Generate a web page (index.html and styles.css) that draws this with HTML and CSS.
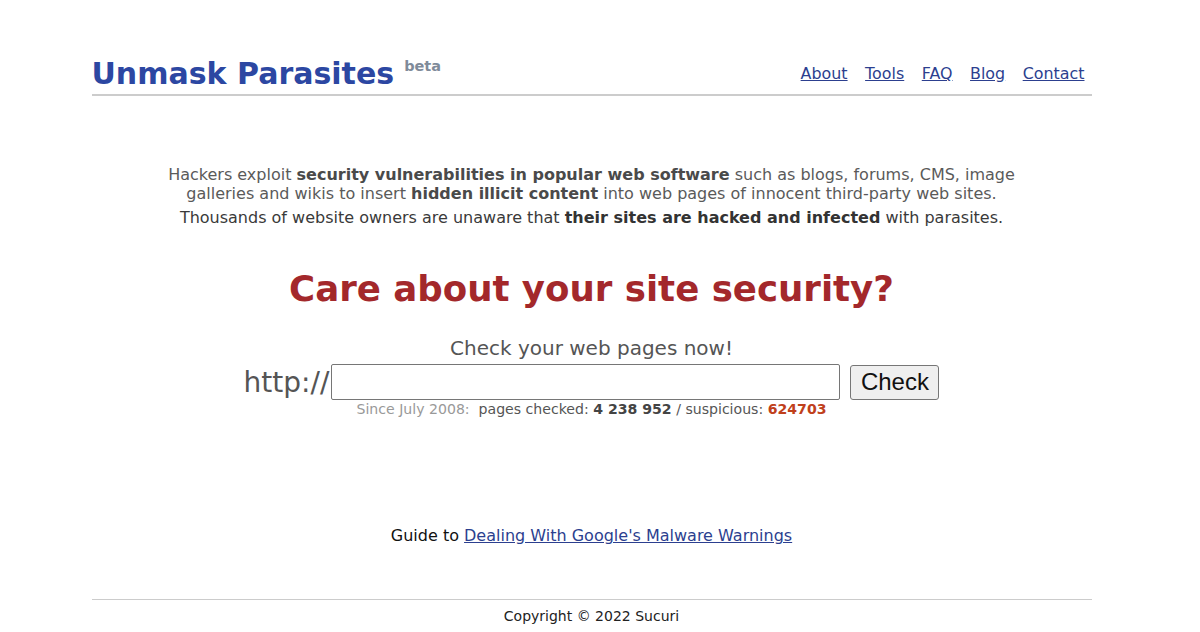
FILE: index.html
```html
<!DOCTYPE html>
<html>
<head>
<meta charset="utf-8">
<title>Unmask Parasites</title>
<link rel="stylesheet" href="styles.css">
</head>
<body>
<div class="page">
  <header class="header">
    <h1 class="logo"><a href="#">Unmask Parasites</a><sup class="beta">beta</sup></h1>
    <nav class="nav">
      <a href="#">About</a>
      <a href="#">Tools</a>
      <a href="#">FAQ</a>
      <a href="#">Blog</a>
      <a href="#">Contact</a>
    </nav>
  </header>

  <section class="intro">
    <p class="intro-1">Hackers exploit <b>security vulnerabilities in popular web software</b> such as blogs, forums, CMS, image galleries and wikis to insert <b>hidden illicit content</b> into web pages of innocent third-party web sites.</p>
    <p class="intro-2">Thousands of website owners are unaware that <b>their sites are hacked and infected</b> with parasites.</p>
  </section>

  <h2 class="headline">Care about your site security?</h2>

  <form class="check" onsubmit="return false">
    <div class="check-label">Check your web pages now!</div>
    <div class="check-row">
      <span class="proto">http://</span><input class="url" type="text"><button class="btn" type="submit">Check</button>
    </div>
    <div class="stats"><span class="since">Since July 2008:</span>&nbsp; pages checked: <b class="num">4 238 952</b> / suspicious: <b class="sus">624703</b></div>
  </form>

  <p class="guide">Guide to <a href="#">Dealing With Google's Malware Warnings</a></p>

  <footer class="footer">Copyright © 2022 Sucuri</footer>
</div>
</body>
</html>
```

FILE: styles.css
```css
html, body {
  margin: 0;
  padding: 0;
  background: #fff;
}
body {
  padding-right: 17px;
  font-family: "DejaVu Sans", Verdana, sans-serif;
  color: #555;
}
.page {
  width: 1000px;
  margin: 0 auto;
}
.header {
  display: flex;
  justify-content: space-between;
  align-items: flex-end;
  margin-top: 53px;
  padding: 0 7px 0 0;
  border-bottom: 2px solid #cccccc;
  height: 41px;
}
.logo {
  margin: 0;
  font-size: 30px;
  font-weight: bold;
  line-height: 40px;
  white-space: nowrap;
}
.logo a {
  color: #2c47a2;
  text-decoration: none;
}
.beta {
  font-size: 14.5px;
  color: #7f8b9a;
  margin-left: 10px;
  vertical-align: top;
  position: relative;
  top: -8px;
}
.nav {
  display: flex;
  gap: 17.5px;
  font-size: 15.9px;
  line-height: 22px;
  padding-bottom: 9px;
}
.nav a {
  color: #2c3f8f;
}
.intro {
  width: 880px;
  margin: 69px auto 0;
  text-align: center;
  font-size: 16px;
  line-height: 19px;
}
.intro p {
  margin: 0;
}
.intro-1 {
  color: #5a5a5a;
}
.intro-1 b {
  color: #4a4a4a;
}
.intro-2 {
  margin-top: 5px !important;
  color: #3a3a3a;
}
.intro-2 b {
  color: #333;
}
.headline {
  margin: 38px 0 0;
  text-align: center;
  color: #a3282b;
  font-size: 35.6px;
  line-height: 48px;
  font-weight: bold;
}
.check {
  margin-top: 22px;
  text-align: center;
}
.check-label {
  font-size: 20px;
  line-height: 26px;
  color: #555;
}
.check-row {
  display: flex;
  justify-content: center;
  align-items: center;
  margin-top: 3px;
}
.proto {
  font-size: 28px;
  color: #555;
  margin-right: 2px;
}
.url {
  box-sizing: border-box;
  width: 509px;
  height: 36px;
  margin: 0;
  border: 1px solid #767676;
  border-radius: 2px;
  font-size: 18px;
  padding: 2px 4px;
}
.btn {
  box-sizing: border-box;
  margin-left: 10px;
  width: 89px;
  height: 35px;
  font-family: "Liberation Sans", Arial, sans-serif;
  font-size: 24px;
  color: #111;
  background: #efefef;
  border: 1px solid #767676;
  border-radius: 3px;
  padding: 0;
}
.stats {
  font-size: 14.1px;
  line-height: 18px;
  color: #555;
  margin-top: 0;
}
.since {
  color: #999;
}
.num {
  color: #444;
}
.sus {
  color: #c0401b;
}
.guide {
  margin: 107px 0 0;
  text-align: center;
  font-size: 16px;
  line-height: 22px;
  color: #111;
}
.guide a {
  color: #2c3f8f;
}
.footer {
  margin-top: 52px;
  border-top: 1px solid #cccccc;
  padding-top: 7px;
  text-align: center;
  font-family: "DejaVu Sans", sans-serif;
  font-size: 14px;
  line-height: 18px;
  color: #222;
}
```
